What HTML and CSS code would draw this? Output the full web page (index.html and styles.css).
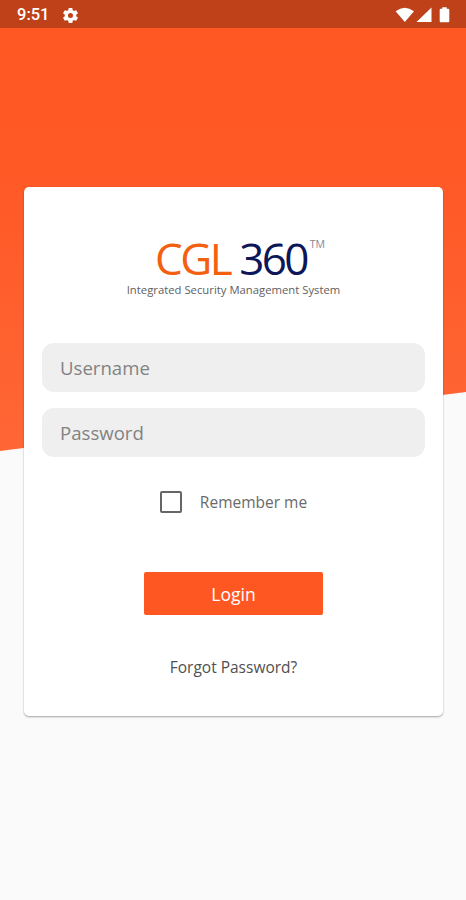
FILE: index.html
```html
<!DOCTYPE html>
<html lang="en">
<head>
  <meta charset="UTF-8" />
  <meta name="viewport" content="width=device-width, initial-scale=1" />
  <title>CGL 360 - Login</title>
  <link rel="stylesheet" href="styles.css">
</head>
<body>
  <div class="status-bar">
    <span class="time">9:51</span>
    <svg class="gear" viewBox="0 0 24 24" aria-hidden="true">
      <path fill="#fff" d="M19.14 12.94c.04-.3.06-.61.06-.94s-.02-.64-.07-.94l2.03-1.58a.49.49 0 0 0 .12-.61l-1.92-3.32a.49.49 0 0 0-.59-.22l-2.39.96a7 7 0 0 0-1.62-.94l-.36-2.54a.48.48 0 0 0-.48-.41h-3.84a.48.48 0 0 0-.47.41l-.36 2.54c-.59.24-1.13.57-1.62.94l-2.39-.96a.48.48 0 0 0-.59.22L2.74 8.87a.48.48 0 0 0 .12.61l2.03 1.58c-.05.3-.09.63-.09.94s.02.64.07.94l-2.03 1.58a.49.49 0 0 0-.12.61l1.92 3.32c.12.22.37.29.59.22l2.39-.96c.5.38 1.03.7 1.62.94l.36 2.54c.05.24.24.41.48.41h3.84c.24 0 .44-.17.47-.41l.36-2.54c.59-.24 1.13-.56 1.62-.94l2.39.96c.22.08.47 0 .59-.22l1.92-3.32a.48.48 0 0 0-.12-.61zM12 15.2A3.2 3.2 0 1 1 12 8.8a3.2 3.2 0 0 1 0 6.4z"/>
    </svg>
    <svg class="indicators" viewBox="0 0 56 18" aria-hidden="true">
      <g fill="#fff">
        <path d="M.6 5.3Q9.8-1.7 19 5.3L9.8 16z"/>
        <path d="M36.5 1.5V16H21.5z"/>
        <path d="M47.3 1.2h4.4v1.5h1.6q1 0 1 1v11.5q0 1-1 1h-7.6q-1 0-1-1V3.7q0-1 1-1h1.6z"/>
      </g>
    </svg>
  </div>

  <div class="page">
    <form class="card">
      <div class="logo">
        <span class="logo-cgl">CGL</span><span class="logo-360">360</span><span class="logo-tm">TM</span>
      </div>
      <div class="tagline">Integrated Security Management System</div>

      <input class="field" type="text" placeholder="Username" aria-label="Username" />
      <input class="field" type="password" placeholder="Password" aria-label="Password" />

      <label class="remember">
        <input type="checkbox" />
        <span>Remember me</span>
      </label>

      <button class="btn-login" type="button">Login</button>
      <a class="forgot" href="#">Forgot Password?</a>
    </form>
  </div>
</body>
</html>
```
FILE: styles.css
```css
* {
  box-sizing: border-box;
}

body {
  margin: 0;
  height: 900px;
  overflow: hidden;
  font-family: 'Open Sans', 'Noto Sans', sans-serif;
  background: #fafafa;
}

/* Status bar */
.status-bar {
  display: flex;
  align-items: center;
  height: 28px;
  padding: 2px 15px 0 17px;
  background: #bf4119;
  color: white;
}

.time {
  font-family: Roboto, sans-serif;
  font-size: 16.5px;
  font-weight: 500;
  line-height: 26px;
}

.gear {
  width: 19px;
  height: 19px;
  margin-left: 12px;
}

.indicators {
  width: 56px;
  height: 18px;
  margin-left: auto;
}

/* Orange slanted background */
.page {
  position: relative;
  height: 872px;
  padding: 159px 23px 0 24px;
}

.page::before {
  content: "";
  position: absolute;
  inset: 0 0 auto 0;
  height: 423px;
  background: linear-gradient(180deg, #ff5722 0%, #ff5a27 40%, #ff6636 100%);
  clip-path: polygon(0 0, 100% 0, 100% 364px, 0 423px);
}

/* Login card */
.card {
  position: relative;
  display: flex;
  flex-direction: column;
  align-items: center;
  height: 529px;
  padding: 41px 18px 0;
  background: white;
  border-radius: 5px;
  box-shadow: 0 1px 2px rgba(0,0,0,0.35);
}

.logo {
  display: flex;
  height: 53px;
  margin-left: 13px;
  font-size: 44px;
  line-height: 60px;
}

.logo-cgl {
  color: #f26010;
  letter-spacing: -2.5px;
}

.logo-360 {
  margin-left: 9px;
  color: #0c1659;
  letter-spacing: -2.7px;
}

.logo-tm {
  margin-left: 3px;
  color: #85889a;
  font-size: 10.5px;
  line-height: 32px;
}

.tagline {
  height: 62px;
  color: #606060;
  font-size: 11.3px;
  line-height: 18px;
  white-space: nowrap;
}

.field {
  width: 100%;
  height: 49px;
  margin-bottom: 16px;
  padding: 0 18px 1px;
  border: none;
  border-radius: 12px;
  background: #efefef;
  color: #444;
  font-family: inherit;
  font-size: 18.6px;
}

.field::placeholder {
  color: #828282;
  opacity: 1;
}

.remember {
  display: flex;
  align-items: center;
  height: 22px;
  margin-top: 18px;
  color: #6a6a6a;
  font-size: 15.5px;
}

.remember input {
  appearance: none;
  width: 22px;
  height: 22px;
  margin: 0 18px 0 0;
  border: 2px solid #666;
  border-radius: 2px;
}

.btn-login {
  width: 179px;
  height: 43px;
  margin-top: 59px;
  padding: 0;
  border: none;
  border-radius: 2px;
  background: #ff5722;
  color: white;
  font-family: inherit;
  font-size: 17.5px;
}

.forgot {
  margin-top: 40px;
  color: #505050;
  font-size: 15.5px;
  line-height: 24px;
  text-decoration: none;
}
```
